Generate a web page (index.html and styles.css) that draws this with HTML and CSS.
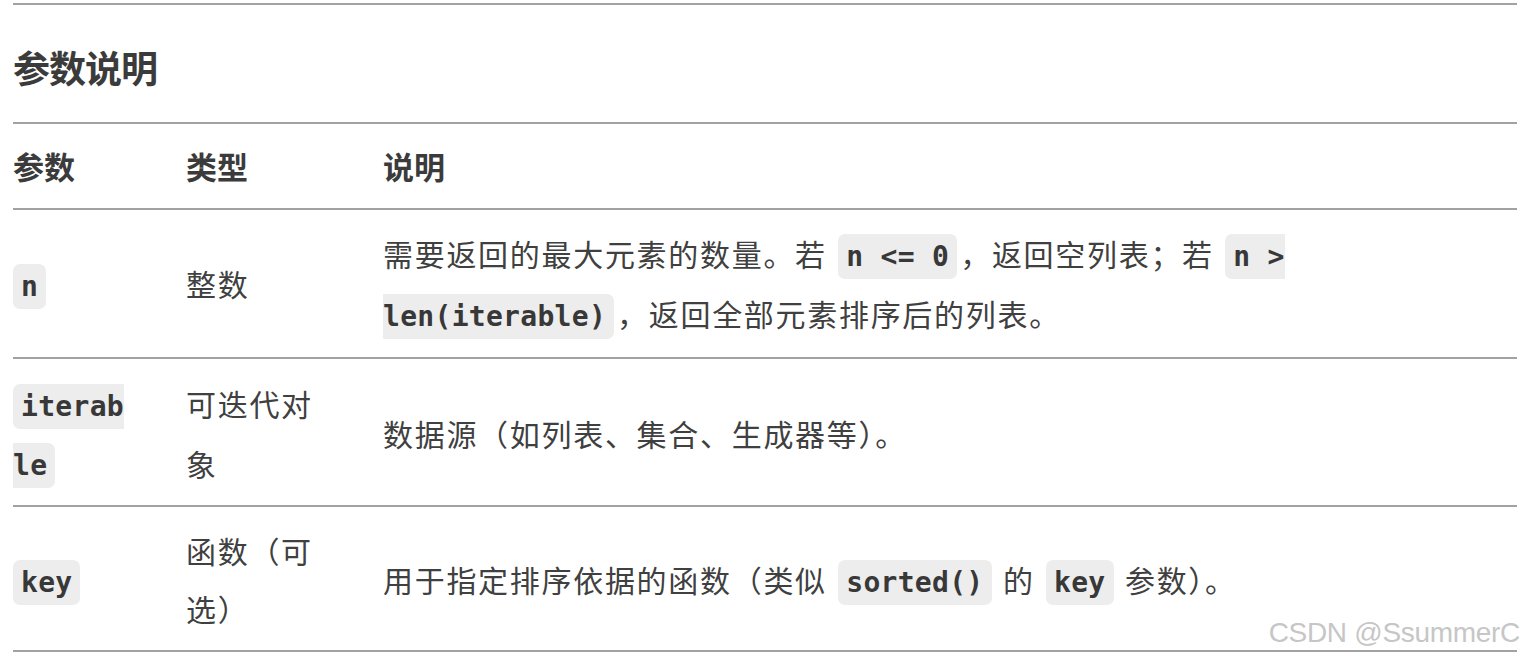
FILE: index.html
```html
<!DOCTYPE html>
<html lang="zh-CN">
<head>
<meta charset="utf-8">
<title>参数说明</title>
<link rel="stylesheet" href="styles.css">
</head>
<body>
<div class="page">
  <div class="prev-rule"></div>
  <h3 class="section-title">参数说明</h3>
  <table class="params">
    <colgroup>
      <col class="col-name">
      <col class="col-type">
      <col class="col-desc">
    </colgroup>
    <thead>
      <tr>
        <th>参数</th>
        <th>类型</th>
        <th>说明</th>
      </tr>
    </thead>
    <tbody>
      <tr class="row-1">
        <td><code>n</code></td>
        <td>整数</td>
        <td>需要返回的最大元素的数量。若 <code>n &lt;= 0</code>，返回空列表；若 <code>n &gt; len(iterable)</code>，返回全部元素排序后的列表。</td>
      </tr>
      <tr class="row-2">
        <td><code>iterable</code></td>
        <td>可迭代对象</td>
        <td>数据源（如列表、集合、生成器等）。</td>
      </tr>
      <tr class="row-3">
        <td><code>key</code></td>
        <td>函数（可选）</td>
        <td>用于指定排序依据的函数（类似 <code>sorted()</code> 的 <code>key</code> 参数）。</td>
      </tr>
    </tbody>
  </table>
  <div class="watermark">CSDN @SsummerC</div>
</div>
</body>
</html>
```
FILE: styles.css
```css
html, body {
  margin: 0;
  padding: 0;
  background: #ffffff;
}

body {
  font-family: "Noto Sans CJK SC", "Noto Sans", sans-serif;
  color: #404040;
}

.page {
  position: relative;
  width: 1504px;
  padding: 3px 0 0 13px;
  height: 657px;
}

.prev-rule {
  border-top: 2px solid #a2a2a2;
}

.section-title {
  margin: 0;
  padding: 34px 0 26px 0;
  font-size: 37px;
  line-height: 57px;
  font-weight: 700;
  color: #3b3b3b;
  letter-spacing: -1px;
}

.params {
  width: 1504px;
  table-layout: fixed;
  border-collapse: collapse;
  border-top: 2px solid #a2a2a2;
}

.col-name { width: 173px; }
.col-type { width: 197px; }

.params th,
.params td {
  padding: 12px 60px 12px 0;
  text-align: left;
  vertical-align: middle;
  font-size: 30px;
  letter-spacing: 1.7px;
  word-break: break-all;
  overflow-wrap: anywhere;
}

.params th:last-child,
.params td:last-child {
  padding-right: 0;
  word-break: normal;
}

.params th {
  font-weight: 700;
  line-height: 60px;
  color: #3b3b3b;
  letter-spacing: 0;
  font-size: 31px;
}

.params thead tr {
  border-bottom: 2px solid #a2a2a2;
}

.params td {
  line-height: 60px;
  font-weight: 400;
}

.params tbody tr {
  border-bottom: 2px solid #a2a2a2;
}

.params .row-1 td { padding-top: 13px; padding-bottom: 14px; }
.params .row-2 td { padding-top: 14px; padding-bottom: 12px; }
.params .row-3 td { padding-top: 14px; padding-bottom: 13px; }

.params .row-2 td:first-child { line-height: 59px; }
.params .row-3 td:nth-child(2) { line-height: 58px; }

.params code {
  font-family: "DejaVu Sans Mono", monospace;
  font-weight: 700;
  font-size: 28px;
  line-height: 1;
  letter-spacing: 0.3px;
  color: #383838;
  background: #ededed;
  border-radius: 7px;
  padding: 6px 8px;
}

.params td:last-child code {
  margin: 0 3px;
}

.watermark {
  position: absolute;
  right: -3px;
  bottom: 12px;
  font-family: "Liberation Sans", Arial, sans-serif;
  font-size: 28px;
  line-height: 30px;
  color: #c6c6c6;
  letter-spacing: -0.3px;
}
```
